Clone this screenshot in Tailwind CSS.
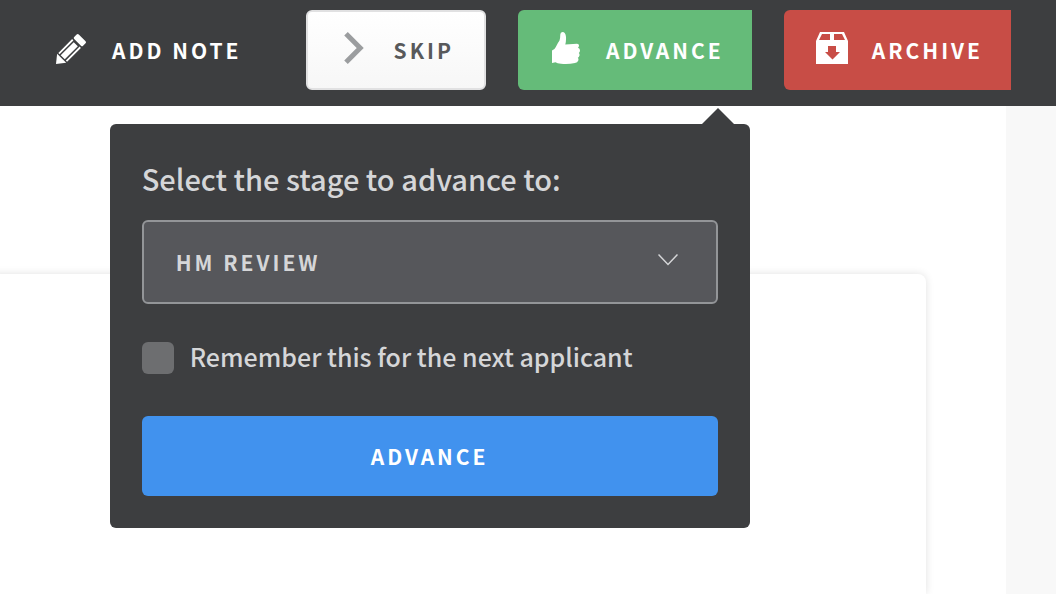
<!doctype html>
<html lang="en">
  <head>
    <meta charset="utf-8">
    <meta name="viewport" content="width=device-width, initial-scale=1">

    <!-- Tailwind CSS -->
    <script src="https://cdn.jsdelivr.net/npm/@tailwindcss/browser@4"></script>
    <title>Review applicant</title>
  </head>
  <body class="flex flex-col min-h-screen bg-[#f8f8f8] font-['Noto_Sans_CJK_SC','Open_Sans',sans-serif]">

    <!-- Action bar -->
    <header class="relative z-10 flex justify-end gap-8 pt-[10px] pb-4 pr-[45px] bg-[#3d3e40]">
        <button type="button" class="flex items-center h-20 gap-6 px-8 text-[21px] leading-none font-bold tracking-[3px] text-white whitespace-nowrap">
            <svg class="w-8 h-8 mb-1 shrink-0 fill-current" viewBox="0 0 32 32" aria-hidden="true">
                <g transform="translate(0 32) rotate(-45)">
                    <path d="M0 0L8 -6.400V6.400z"/>
                    <path d="M9.500 -6.200H29V-4.400H9.500zM9.500 4.400H29V6.200H9.500zM9.500 -2.900H28V2.900H9.500z"/>
                    <rect x="30.500" y="-6.300" width="6.500" height="12.600" rx="1.500"/>
                </g>
            </svg>
            <span>ADD NOTE</span>
        </button>

        <button type="button" class="flex items-center h-20 gap-6 px-[30px] text-[21px] leading-none font-bold tracking-[3px] text-[#58595b] whitespace-nowrap rounded-md border-2 border-[#e1e1e2] bg-linear-to-b from-white to-[#f7f7f7]">
            <svg class="w-8 h-8 mb-1 shrink-0 fill-none stroke-[#9b9d9f] stroke-[5]" viewBox="0 0 32 32" aria-hidden="true">
                <path d="M8 1.800L22.200 16 8 30.200"/>
            </svg>
            <span>SKIP</span>
        </button>

        <div class="relative">
            <button type="button" class="flex items-center h-20 gap-6 pl-8 pr-7 text-[21px] leading-none font-bold tracking-[3px] text-white whitespace-nowrap rounded-l-md bg-[#65bb79]" aria-expanded="true">
                <svg class="w-8 h-8 mb-1 shrink-0 fill-current" viewBox="0 0 32 32" aria-hidden="true">
                    <path d="M2 18.500q2.500-.5 3.800-3.500Q8 10.500 9.500 8.500 10.300 6 10.300 2.500 10.300 0 12.500 0 15.500 0 16 5 16.200 9 15.300 12.500L27 11.700Q29 11.700 29 13.500 29 15 28 15.700 30 16.500 30 18.500 30 20.300 28.800 21 29.800 22 29.500 23.500 29 25.300 27.800 25.800 28.800 27 28.300 28.500 27.500 30.500 25 31 18 32.500 11 31.700 7 31.200 5.500 30.200L2 31z"/>
                </svg>
                <span>ADVANCE</span>
            </button>

            <!-- Advance popover -->
            <form class="absolute top-[114px] right-[2px] w-[640px] p-8 rounded-md bg-[#3d3e40] text-[#d5d6d8]">
                <svg class="absolute -top-4 right-4 w-8 h-4 fill-[#3d3e40]" viewBox="0 0 32 16" aria-hidden="true"><path d="M0 16L16 0l16 16z"/></svg>
                <label for="stage" class="block text-[29px] leading-[44px] font-medium">Select the stage to advance to:</label>
                <div class="relative mt-5">
                    <select id="stage" class="block w-full h-21 px-8 pt-[2px] rounded-md border-2 border-[#939598] bg-[#56575b] appearance-none text-[21px] font-bold tracking-[3px]">
                        <option>HM REVIEW</option>
                    </select>
                    <svg class="absolute top-8 right-10 w-5 h-4 fill-none stroke-current stroke-[1.5] pointer-events-none" viewBox="0 0 20 16" aria-hidden="true"><path d="M.5 2.500l9.500 10 9.500-10"/></svg>
                </div>
                <div class="flex items-start h-8 gap-4 mt-[38px] mb-[42px]">
                    <input type="checkbox" id="remember" class="w-8 h-8 rounded-md bg-[#6d6e70] appearance-none">
                    <label for="remember" class="text-[25px] leading-7 font-medium">Remember this for the next applicant</label>
                </div>
                <button type="submit" class="block w-full h-20 rounded-md bg-[#4192ee] text-[21px] leading-none font-bold tracking-[3px] text-white">ADVANCE</button>
            </form>
        </div>

        <button type="button" class="flex items-center h-20 gap-6 pl-8 pr-7 text-[21px] leading-none font-bold tracking-[3px] text-white whitespace-nowrap rounded-l-md bg-[#c84d46]">
            <svg class="w-8 h-8 mb-1 shrink-0 fill-current" viewBox="0 0 32 32" aria-hidden="true">
                <path fill-rule="evenodd" d="M4 0h24l4 9v23H0V9zM6 2L3 8h11V2zM18 2v6h11l-3-6zM12 14v6H9l7.500 7.500L24 20h-4v-6z"/>
            </svg>
            <span>ARCHIVE</span>
        </button>
    </header>

    <!-- Applicant -->
    <main class="flex flex-col grow mr-[50px] pt-[168px] pr-20 bg-white overflow-hidden">
        <section class="grow -ml-2 rounded-tr-lg bg-white shadow-[0_0_8px_rgba(0,0,0,0.12)]"></section>
    </main>

  </body>
</html>
